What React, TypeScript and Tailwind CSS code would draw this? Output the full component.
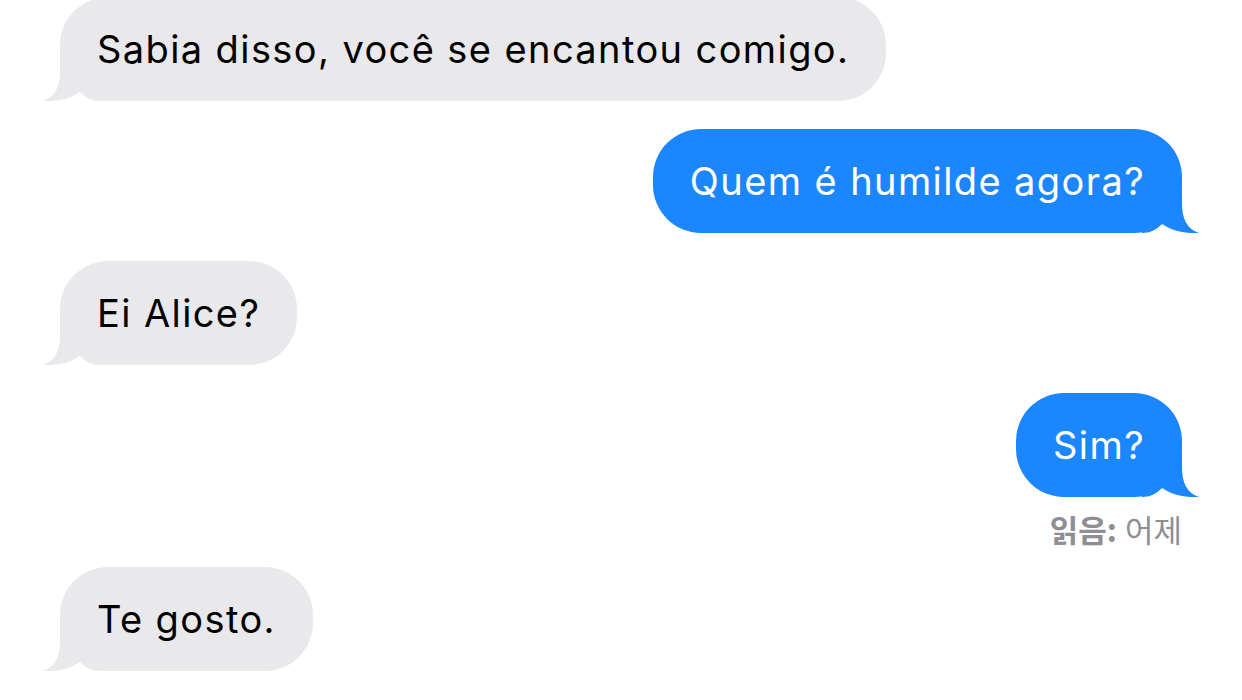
import React from "react";

type Msg = { text: string; mine?: boolean; receipt?: string };

const messages: Msg[] = [
  { text: "Sabia disso, você se encantou comigo." },
  { text: "Quem é humilde agora?", mine: true },
  { text: "Ei Alice?" },
  { text: "Sim?", mine: true, receipt: "어제" },
  { text: "Te gosto." },
];

function Tail({ mine }: { mine?: boolean }) {
  // drawn for the right side; mirrored for incoming bubbles
  return (
    <svg
      viewBox="0 0 57 44"
      className={
        mine
          ? "absolute bottom-0 -right-[17px] w-[57px] h-[44px] fill-[#1b86fe]"
          : "absolute bottom-0 -left-[17px] w-[57px] h-[44px] fill-[#e9e9eb] -scale-x-100"
      }
    >
      <path d="M0 0 L40 0 L40 14 C40 30 45 40 57 44 C45 45 30 42 20 35 C14 41 8 44 0 44 Z" />
    </svg>
  );
}

function Bubble({ msg }: { msg: Msg }) {
  return (
    <div className={msg.mine ? "flex justify-end" : "flex justify-start"}>
      <div
        className={
          msg.mine
            ? "relative rounded-[48px] bg-[#1b86fe] text-white px-[37px] py-[29px] leading-[46px] tracking-[1.4px]"
            : "relative rounded-[48px] bg-[#e9e9eb] text-black px-[37px] py-[29px] leading-[46px] tracking-[1.4px]"
        }
      >
        <Tail mine={msg.mine} />
        <span className="relative">{msg.text}</span>
      </div>
    </div>
  );
}

export default function App() {
  return (
    <div
      className="w-[1242px] h-[700px] overflow-hidden bg-white px-[60px] text-[38px]"
      style={{ fontFamily: "Inter, 'Noto Sans CJK KR', sans-serif" }}
    >
      <div className="flex flex-col gap-[28px] -mt-[3px]">
        {messages.map((m, i) => (
          <div key={i}>
            <Bubble msg={m} />
            {m.receipt && (
              <div className="flex justify-end pt-[12px] -mb-[10px] text-[31px] leading-[40px] text-[#8e8e93] font-['Noto_Sans_CJK_KR',sans-serif]">
                <span className="font-semibold">읽음:</span>
                <span className="ml-[8px]">{m.receipt}</span>
              </div>
            )}
          </div>
        ))}
      </div>
    </div>
  );
}
